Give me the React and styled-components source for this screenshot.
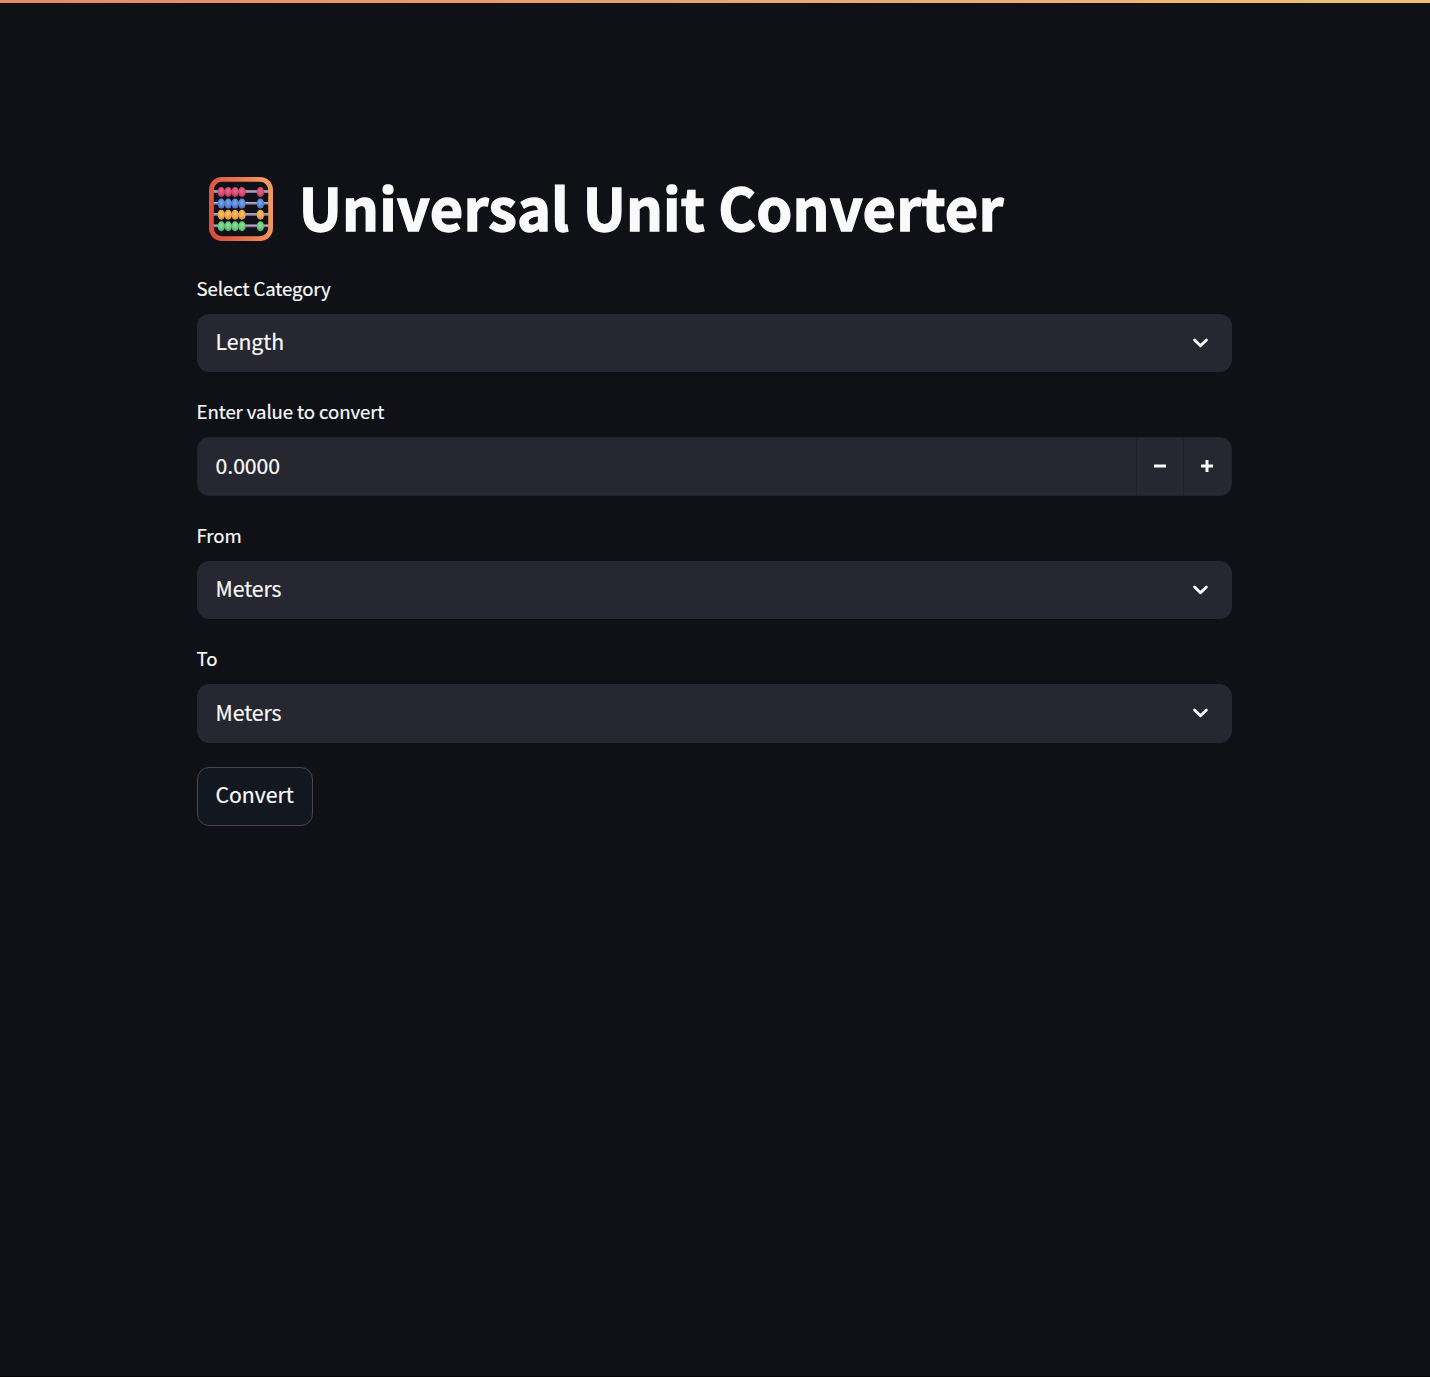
import React from "react";
import styled, { createGlobalStyle } from "styled-components";

const GlobalStyle = createGlobalStyle`
  * { box-sizing: border-box; }
  html, body { margin: 0; background: #0f1116; }
  body {
    font-family: "Noto Sans CJK SC", "Noto Sans", sans-serif;
    color: #fafafa;
  }
  button, input { font: inherit; color: inherit; }
`;

const Page = styled.div`
  height: 1377px;
  background: #0f1116;
  border-bottom: 1px solid #030304;
`;

const Decoration = styled.div`
  height: 3px;
  background: linear-gradient(90deg, #e68a64, #f0c175);
`;

const Main = styled.main`
  width: 1035.4px;
  margin-left: 196.6px;
  padding-top: 166px;
`;

const Title = styled.h1`
  display: flex;
  align-items: flex-start;
  height: 80px;
  margin: 0 0 22.8px;
  padding-left: 12.2px;
  gap: 26px;
  font-size: 57.7px;
  font-weight: 700;
  line-height: 74px;
  letter-spacing: 0.13px;
  white-space: nowrap;
`;

const TitleText = styled.span`
  display: block;
  -webkit-text-stroke: 1.3px #fafafa;
`;

const Field = styled.div`
  height: 100.6px;
  margin-bottom: 22.9px;
`;

const Label = styled.label`
  display: block;
  height: 41.8px;
  font-size: 18.6px;
  line-height: 31px;
  letter-spacing: -0.08px;
  -webkit-text-stroke: 0.2px #fafafa;
`;

const Control = styled.div`
  display: flex;
  align-items: center;
  height: 58.7px;
  border: 1.5px solid ${(p) => (p.$outlined ? "#22242b" : "#262730")};
  border-radius: 12px;
  background: #262730;
  overflow: hidden;
`;

const Value = styled.div`
  flex: 1;
  padding: 0 0 3px 18px;
  font-size: 21.2px;
  line-height: 36px;
  letter-spacing: -0.05px;
  -webkit-text-stroke: 0.2px #fafafa;
`;

const Arrow = styled.div`
  display: flex;
  width: 17px;
  margin-right: 21.9px;
`;

const Step = styled.button`
  display: flex;
  align-items: center;
  justify-content: center;
  width: 47px;
  height: 100%;
  padding: 0;
  border: 0;
  border-left: 1px solid #1f2027;
  background: transparent;

  &:last-child {
    width: 48px;
    padding-right: 1px;
  }
`;

const ConvertButton = styled.button`
  display: block;
  height: 58.7px;
  width: 116px;
  margin-top: 24px;
  padding: 0 0 4px;
  border: 1.5px solid #45474c;
  border-radius: 12px;
  background: #131720;
  font-size: 21.2px;
  line-height: 36px;
  -webkit-text-stroke: 0.2px #fafafa;
`;

const beadRows = [
  { y: 15, id: "pink", light: "#f2668a", dark: "#b62a5c" },
  { y: 26.6, id: "blue", light: "#79a9f0", dark: "#3a62b8" },
  { y: 37.8, id: "amber", light: "#ffcb62", dark: "#d98235" },
  { y: 49.2, id: "green", light: "#8ee595", dark: "#3fa665" },
];

const AbacusIcon = styled.svg`
  flex: none;
  margin-top: 7.6px;
`;

function Abacus() {
  return (
    <AbacusIcon width="64" height="64" viewBox="0 0 64 64" aria-hidden="true">
      <defs>
        <linearGradient id="frame" x1="0" y1=".6" x2="1" y2=".4">
          <stop offset="0" stopColor="#dc4f3d" />
          <stop offset="1" stopColor="#f19a5f" />
        </linearGradient>
        {beadRows.map((r) => (
          <radialGradient key={r.id} id={r.id} cx=".5" cy=".4" r=".75">
            <stop offset="0" stopColor={r.light} />
            <stop offset="1" stopColor={r.dark} />
          </radialGradient>
        ))}
      </defs>
      {beadRows.map((r) => (
        <g key={r.id}>
          <rect x="4" y={r.y - 1.6} width="56" height="2.6" fill="#8b789f" />
          <rect x="4" y={r.y - 1.6} width="56" height="1.3" fill="#bba9ca" />
          {[12.3, 19.2, 26.1, 33, 51.4].map((x) => (
            <ellipse key={x} cx={x} cy={r.y} rx="3.7" ry="5" fill={`url(#${r.id})`} />
          ))}
        </g>
      ))}
      <rect x="2.4" y="2.4" width="59.2" height="59.2" rx="10.5" fill="none" stroke="url(#frame)" strokeWidth="4.8" />
    </AbacusIcon>
  );
}

function Select({ label, value }) {
  return (
    <Field>
      <Label>{label}</Label>
      <Control>
        <Value>{value}</Value>
        <Arrow>
          <svg width="17" height="12" viewBox="0 0 17 12">
            <path d="M2.6 3L8.5 8.8L14.4 3" fill="none" stroke="#fafafa" strokeWidth="2.9" strokeLinecap="round" strokeLinejoin="round" />
          </svg>
        </Arrow>
      </Control>
    </Field>
  );
}

function NumberField({ label, value }) {
  return (
    <Field>
      <Label>{label}</Label>
      <Control $outlined>
        <Value>{value}</Value>
        <Step aria-label="Decrease">
          <svg width="12" height="12" viewBox="0 0 12 12"><path d="M0 6H12" stroke="#fafafa" strokeWidth="3" /></svg>
        </Step>
        <Step aria-label="Increase">
          <svg width="12" height="12" viewBox="0 0 12 12"><path d="M0 6H12M6 0V12" stroke="#fafafa" strokeWidth="3" /></svg>
        </Step>
      </Control>
    </Field>
  );
}

export default function App() {
  return (
    <Page>
      <GlobalStyle />
      <Decoration />
      <Main>
        <Title>
          <Abacus />
          <TitleText>Universal Unit Converter</TitleText>
        </Title>
        <Select label="Select Category" value="Length" />
        <NumberField label="Enter value to convert" value="0.0000" />
        <Select label="From" value="Meters" />
        <Select label="To" value="Meters" />
        <ConvertButton>Convert</ConvertButton>
      </Main>
    </Page>
  );
}
